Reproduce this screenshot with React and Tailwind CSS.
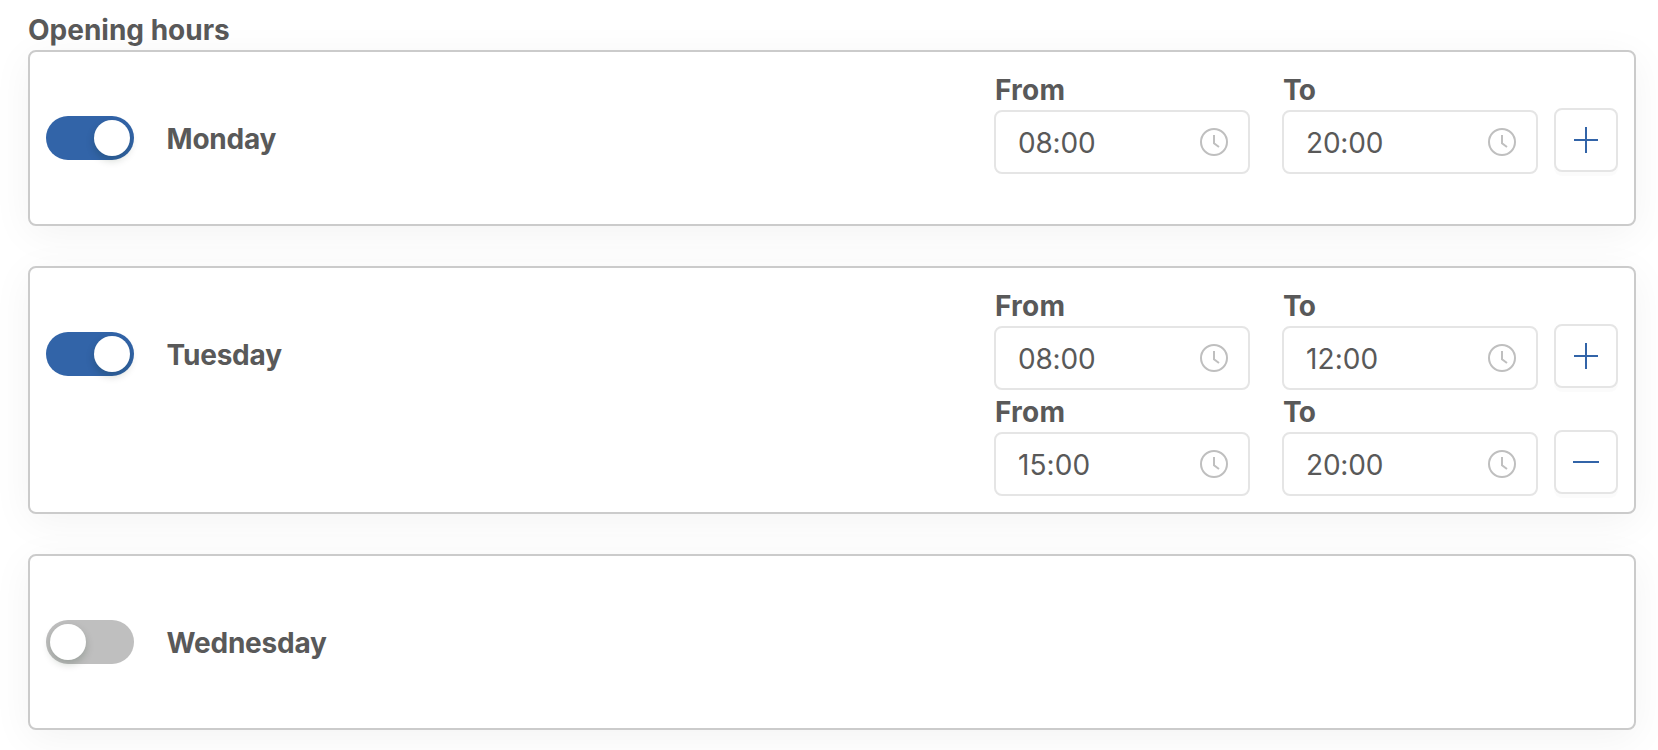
const DAYS = [
  { name: 'Monday', open: true, slots: [['08:00', '20:00']] },
  { name: 'Tuesday', open: true, slots: [['08:00', '12:00'], ['15:00', '20:00']] },
  { name: 'Wednesday', open: false, slots: [] },
];

function ClockIcon() {
  return (
    <svg className="size-7" viewBox="0 0 28 28" fill="none" stroke="#bfbfbf" strokeWidth="2">
      <circle cx="14" cy="14" r="13" />
      <path d="M14 7v8.2l5 3.8" />
    </svg>
  );
}

function Toggle({ on }) {
  return (
    <button
      role="switch"
      aria-checked={on}
      className={`mt-12 flex h-11 w-22 shrink-0 items-center rounded-full p-1 ${on ? 'justify-end bg-[#3264a8]' : 'justify-start bg-[#bfbfbf]'}`}
    >
      <span className="size-9 rounded-full bg-white shadow-[0_4px_8px_0_rgba(0,35,11,0.2)]" />
    </button>
  );
}

function TimeField({ label, value }) {
  return (
    <div className="w-64">
      <div className={`h-[42px] text-[28px] leading-[44px] font-bold ${label === 'To' ? 'pl-px tracking-[-0.8px]' : 'pl-px tracking-[0.2px]'}`}>{label}</div>
      <div className="flex h-16 items-center justify-between rounded-lg border-2 border-[#e5e5e5] bg-white pr-5 pl-[22px]">
        <span className={`pt-0.5 text-[28px] leading-none ${value.startsWith('1') ? 'tracking-[0.1px]' : 'tracking-[-0.2px]'}`}>{value}</span>
        <ClockIcon />
      </div>
    </div>
  );
}

function SlotButton({ add }) {
  return (
    <button className="mb-0.5 ml-4 flex size-16 items-center justify-center self-end rounded-lg border-2 border-[#e5e5e5] bg-white shadow-[0_4px_0_0_rgba(0,0,0,0.016)]">
      <svg className="size-7" viewBox="0 0 28 28" fill="#3264a8" shapeRendering="crispEdges">
        {add ? <path d="M2 13h24v2H2zM13 1h2v26h-2z" /> : <path d="M1 13h26v2H1z" />}
      </svg>
    </button>
  );
}

function DayCard({ day }) {
  return (
    <section className="flex min-h-44 items-start rounded-lg border-2 border-[#cbcbcb] bg-white p-4 shadow-[0_8px_40px_0_rgba(0,0,0,0.05)]">
      <Toggle on={day.open} />
      <h2 className="mt-12 ml-8 pl-[0.5px] text-[28px] leading-[46px] font-bold tracking-[-0.2px]">{day.name}</h2>
      <div className="ml-auto flex flex-col">
        {day.slots.map(([from, to], i) => (
          <div key={i} className="flex">
            <TimeField label="From" value={from} />
            <div className="w-8" />
            <TimeField label="To" value={to} />
            <SlotButton add={i === 0} />
          </div>
        ))}
      </div>
    </section>
  );
}

export default function App() {
  return (
    <main className="h-[750px] overflow-hidden bg-white pr-[22px] pl-7 font-['Inter',sans-serif] text-[#595959]">
      <h1 className="h-[50px] pt-2 text-[28px] leading-[44px] font-bold">Opening hours</h1>
      <div className="flex flex-col gap-10">
        {DAYS.map((day) => (
          <DayCard key={day.name} day={day} />
        ))}
      </div>
    </main>
  );
}
